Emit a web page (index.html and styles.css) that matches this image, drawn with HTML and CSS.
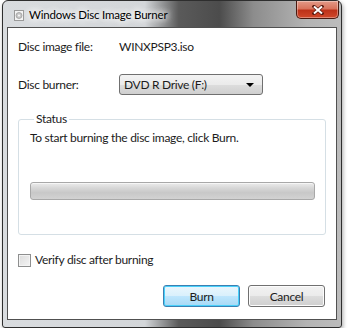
FILE: index.html
```html
<!DOCTYPE html>
<html lang="en">
<head>
    <meta charset="UTF-8">
    <title>Windows Disc Image Burner</title>
    <link rel="stylesheet" href="styles.css">
</head>
<body>

<div class="window">
    <div class="titlebar">
        <svg class="app-icon" width="10" height="11" viewBox="0 0 10 11">
            <rect x="0.5" y="0.5" width="9" height="10" fill="#f4f4f4" stroke="#9a9a9a"/>
            <circle cx="5" cy="5.5" r="3" fill="#c8c8c8" stroke="#8a8a8a" stroke-width="0.6"/>
            <circle cx="5" cy="5.5" r="0.9" fill="#ffffff"/>
        </svg>
        <span class="title">Windows Disc Image Burner</span>
        <button class="close-btn">
            <svg width="12" height="10" viewBox="0 0 12 10">
                <path d="M2 1.5 L10 8.5 M10 1.5 L2 8.5" stroke="#5a1a10" stroke-width="3.4" stroke-linecap="square"/>
                <path d="M2 1.5 L10 8.5 M10 1.5 L2 8.5" stroke="#ffffff" stroke-width="2"/>
            </svg>
        </button>
    </div>

    <div class="client">
        <div class="field-grid">
            <span class="label">Disc image file:</span>
            <span class="value">WINXPSP3.iso</span>
            <span class="label">Disc burner:</span>
            <div class="combo">
                <span>DVD R Drive (F:)</span>
                <span class="combo-arrow"></span>
            </div>
        </div>

        <fieldset class="group">
            <legend>Status</legend>
            <p class="status-text">To start burning the disc image, click Burn.</p>
            <div class="progress"></div>
        </fieldset>

        <label class="check-row">
            <span class="checkbox"></span>
            Verify disc after burning
        </label>

        <div class="btn-row">
            <button class="btn btn-default">Burn</button>
            <button class="btn">Cancel</button>
        </div>
    </div>
</div>

</body>
</html>
```

FILE: styles.css
```css
body {
    margin: 0;
    padding: 0;
    background-color: #ffffff;
    font-family: Lato, "Open Sans", Arial, sans-serif;
    font-size: 12px;
    line-height: 16px;
    letter-spacing: -0.3px;
    color: #1c1c1c;
}

.window {
    box-sizing: border-box;
    width: 340px;
    height: 328px;
    margin-left: 2px;
    padding: 0 4px 7px 4px;
    display: flex;
    flex-direction: column;
    border: 1px solid #2e2e2e;
    border-radius: 6px 6px 3px 3px;
    background: linear-gradient(to right, #d9dcdf 0%, #d3d6d9 42%, #5a5a5a 52%, #4c4c4c 64%, #8c8c8c 74%, #b4b4b4 90%, #bcbcbc 100%);
    box-shadow: 1px 2px 4px rgba(0, 0, 0, 0.35);
}

/* title bar */
.titlebar {
    height: 26px;
    flex: none;
    display: flex;
    align-items: flex-start;
}

.app-icon {
    margin: 9px 0 0 7px;
}

.title {
    margin: 6px 0 0 5px;
    font-size: 11.5px;
    letter-spacing: -0.2px;
    color: #000;
    text-shadow: 0 0 6px #fff, 0 0 8px #fff, 0 0 10px #fff;
}

.close-btn {
    margin-left: auto;
    margin-right: -2px;
    width: 43px;
    height: 18px;
    padding: 0;
    display: flex;
    align-items: center;
    justify-content: center;
    border: 1px solid #4a1a10;
    border-top: none;
    border-radius: 0 0 5px 5px;
    background: linear-gradient(to bottom, #e39a88 0%, #d8735c 45%, #bd3219 55%, #d0482a 100%);
    box-shadow: inset 0 0 0 1px rgba(255, 255, 255, 0.35);
}

/* client area */
.client {
    flex: 1;
    background-color: #ffffff;
    border: 1px solid #505050;
    padding: 0 10px;
}

.field-grid {
    display: grid;
    grid-template-columns: 101px auto;
    grid-template-rows: 14px 21px;
    row-gap: 20px;
    align-items: center;
    margin-top: 12px;
}

.combo {
    box-sizing: border-box;
    width: 144px;
    height: 21px;
    padding: 0 8px 0 4px;
    display: flex;
    align-items: center;
    justify-content: space-between;
    border: 1px solid #707070;
    border-radius: 3px;
    background: linear-gradient(to bottom, #f3f3f3 0%, #ebebeb 50%, #dddddd 51%, #cfcfcf 100%);
}

.combo-arrow {
    width: 0;
    height: 0;
    border-left: 4px solid transparent;
    border-right: 4px solid transparent;
    border-top: 4px solid #000;
}

.group {
    margin: 16px 0 0 0;
    padding: 0 10px 34px 11px;
    border: 1px solid #d5dfe5;
    border-radius: 3px;
}

.group legend {
    padding: 0 2px;
    margin-left: 4px;
}

.status-text {
    margin: 3px 0 0 0;
}

.progress {
    box-sizing: border-box;
    height: 18px;
    margin-top: 36px;
    border: 1px solid #a8a8a8;
    border-radius: 3px;
    background: linear-gradient(to bottom, #ececec 0%, #d8d8d8 30%, #c8c8c8 60%, #d2d2d2 100%);
    box-shadow: inset 0 1px 0 #f6f6f6;
}

.check-row {
    margin-top: 17px;
    display: flex;
    align-items: center;
    gap: 4px;
}

.checkbox {
    box-sizing: border-box;
    width: 13px;
    height: 13px;
    border: 1px solid #8e8f8f;
    background: linear-gradient(to bottom right, #dcdcdc 0%, #f4f4f4 100%);
    box-shadow: inset 0 0 0 1px #f4f4f4;
}

.btn-row {
    margin-top: 17px;
    display: flex;
    justify-content: flex-end;
    gap: 8px;
    padding-right: 1px;
}

.btn {
    box-sizing: border-box;
    width: 77px;
    height: 22px;
    padding: 0;
    font-family: inherit;
    font-size: 12px;
    letter-spacing: inherit;
    color: #1c1c1c;
    border: 1px solid #707070;
    border-radius: 3px;
    background: linear-gradient(to bottom, #f2f2f2 0%, #ebebeb 50%, #dddddd 51%, #cfcfcf 100%);
    box-shadow: inset 0 0 0 1px #fcfcfc;
}

.btn-default {
    border-color: #3c7fb1;
    background: linear-gradient(to bottom, #eaf6fd 0%, #d9f0fc 50%, #bee6fd 51%, #a7d9f5 100%);
    box-shadow: inset 0 0 0 1px #48d1fb;
}
```
